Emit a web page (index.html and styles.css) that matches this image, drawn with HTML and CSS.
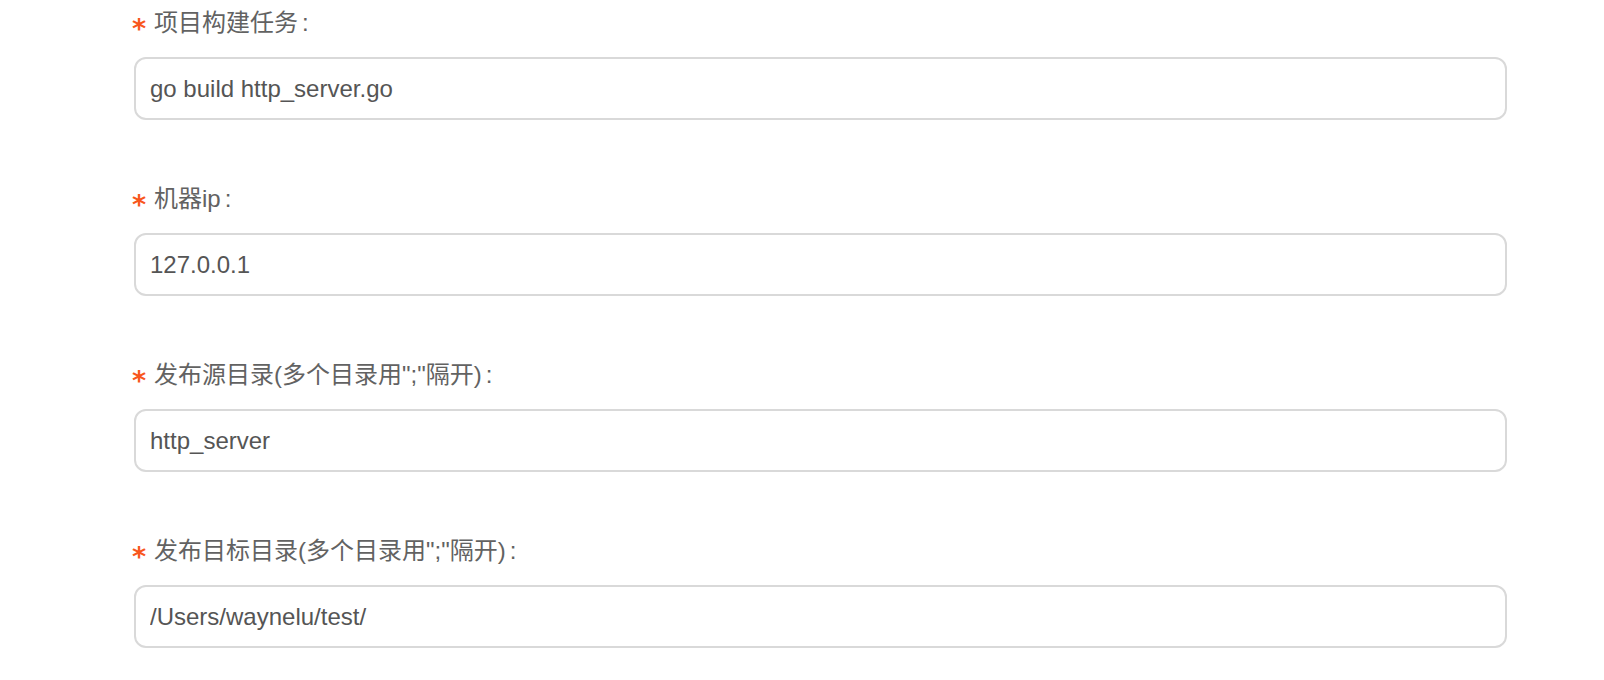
FILE: index.html
```html
<!DOCTYPE html>
<html lang="zh-CN">
<head>
<meta charset="utf-8">
<title>发布配置</title>
<link rel="stylesheet" href="styles.css">
</head>
<body>
<form class="form">
  <div class="form-item">
    <label class="form-label"><span class="req">*</span>项目构建任务</label>
    <input class="form-input" type="text" value="go build http_server.go">
  </div>
  <div class="form-item">
    <label class="form-label"><span class="req">*</span>机器ip</label>
    <input class="form-input" type="text" value="127.0.0.1">
  </div>
  <div class="form-item">
    <label class="form-label"><span class="req">*</span>发布源目录(多个目录用";"隔开)</label>
    <input class="form-input" type="text" value="http_server">
  </div>
  <div class="form-item">
    <label class="form-label"><span class="req">*</span>发布目标目录(多个目录用";"隔开)</label>
    <input class="form-input" type="text" value="/Users/waynelu/test/">
  </div>
</form>
</body>
</html>
```

FILE: styles.css
```css
html, body {
  margin: 0;
  padding: 0;
  background: #ffffff;
}

body {
  font-family: "Liberation Sans", "Noto Sans CJK SC", sans-serif;
  overflow: hidden;
}

.form {
  display: flex;
  flex-direction: column;
  padding-left: 134px;
  width: 1373px;
}

.form-item {
  display: flex;
  flex-direction: column;
  margin-bottom: 56px;
}

.form-label {
  display: block;
  height: 46px;
  line-height: 46px;
  font-size: 24px;
  color: #626262;
  margin-bottom: 11px;
  white-space: nowrap;
}

.form-label::after {
  content: ":";
  margin-left: 4px;
}

.req {
  display: inline-block;
  color: #f8561c;
  font-family: "DejaVu Sans", sans-serif;
  font-weight: bold;
  font-size: 27px;
  width: 12px;
  margin-left: -2px;
  margin-right: 10px;
  vertical-align: -7px;
  line-height: 1;
}

.form-input {
  box-sizing: border-box;
  height: 63px;
  width: 100%;
  border: 2px solid #d9d9d9;
  border-radius: 12px;
  padding: 0 14px;
  font-family: "Liberation Sans", "Noto Sans CJK SC", sans-serif;
  font-size: 24px;
  color: #555555;
  background: #ffffff;
  outline: none;
  margin: 0;
}
```
